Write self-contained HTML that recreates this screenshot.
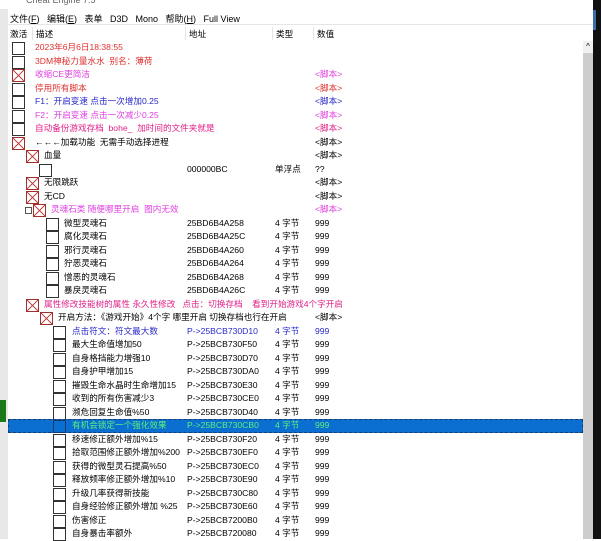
<!DOCTYPE html><html><head><meta charset="utf-8"><style>
body{margin:0;width:601px;height:539px;overflow:hidden;background:#fff;font-family:"Liberation Sans","Noto Sans CJK SC",sans-serif;font-size:8.6px;position:relative}
.a{position:absolute;white-space:nowrap}
.r{position:absolute;left:8px;width:575px;height:13.5px}
.b{position:absolute;top:1px;width:11px;height:11px;border:1px solid #333;background:#fff}
.x{background:linear-gradient(45deg,transparent 46%,#c03838 48%,#c03838 52%,transparent 54%),linear-gradient(-45deg,transparent 46%,#c03838 48%,#c03838 52%,transparent 54%) #fff;border-color:#a03030}
.t{position:absolute;top:0;line-height:13.5px}
.ad{left:179px}.ty{left:267px}.va{left:307px}
.red{color:#e03030}.mag{color:#e040e0}.blu{color:#2828c8}.pk{color:#e0208a}
</style></head><body>
<div class="a" style="left:0;top:0;width:8px;height:539px;background:#e8e8e8"></div>
<div class="a" style="left:0;top:400px;width:6px;height:22px;background:#1a7a1a"></div>
<div class="a" style="left:0;top:0;width:601px;height:9px;background:#fff"></div>
<div class="a" style="left:26px;top:-5px;font-size:9px;color:#666">Cheat Engine 7.5</div>
<div class="a" style="left:10px;top:12px;color:#000;font-size:9px">文件(<u>F</u>)&nbsp;&nbsp; 编辑(<u>E</u>)&nbsp;&nbsp; 表单&nbsp;&nbsp; D3D&nbsp;&nbsp; Mono&nbsp;&nbsp; 帮助(<u>H</u>)&nbsp;&nbsp; Full View</div>
<div class="a" style="left:8px;top:24px;width:585px;height:1px;background:#e5e5e5"></div>
<div class="a" style="left:10px;top:28px">激活</div>
<div class="a" style="left:36px;top:28px">描述</div>
<div class="a" style="left:189px;top:28px">地址</div>
<div class="a" style="left:276px;top:28px">类型</div>
<div class="a" style="left:317px;top:28px">数值</div>
<div class="a" style="left:32px;top:27px;width:1px;height:13px;background:#e5e5e5"></div>
<div class="a" style="left:185px;top:27px;width:1px;height:13px;background:#e5e5e5"></div>
<div class="a" style="left:272px;top:27px;width:1px;height:13px;background:#e5e5e5"></div>
<div class="a" style="left:313px;top:27px;width:1px;height:13px;background:#e5e5e5"></div>
<div class="a" style="left:583px;top:41px;width:10px;height:498px;background:#cdcdcd"></div>
<div class="a" style="left:583px;top:41px;width:10px;height:12px;background:#f0f0f0;font-size:8px;text-align:center;line-height:12px">^</div>
<div class="a" style="left:593px;top:0;width:8px;height:539px;background:#111"></div>
<div class="a" style="left:593px;top:10px;width:3px;height:20px;background:#3a6ea5"></div>

<div class="r" style="top:41px"><div class="b" style="left:4px"></div><div class="t red" style="left:27px">2023年6月6日18:38:55</div></div>
<div class="r" style="top:54.5px"><div class="b" style="left:4px"></div><div class="t red" style="left:27px">3DM神秘力量水水&nbsp; 别名：薄荷</div></div>
<div class="r" style="top:68px"><div class="b x" style="left:4px"></div><div class="t mag" style="left:27px">收缩CE更简洁</div><div class="t va mag">&lt;脚本&gt;</div></div>
<div class="r" style="top:81.5px"><div class="b" style="left:4px"></div><div class="t red" style="left:27px">停用所有脚本</div><div class="t va red">&lt;脚本&gt;</div></div>
<div class="r" style="top:95px"><div class="b" style="left:4px"></div><div class="t blu" style="left:27px">F1：开启变速 点击一次增加0.25</div><div class="t va blu">&lt;脚本&gt;</div></div>
<div class="r" style="top:108.5px"><div class="b" style="left:4px"></div><div class="t mag" style="left:27px">F2：开启变速 点击一次减少0.25</div><div class="t va mag">&lt;脚本&gt;</div></div>
<div class="r" style="top:122px"><div class="b" style="left:4px"></div><div class="t pk" style="left:27px">自动备份游戏存档&nbsp; bohe_&nbsp; 加时间的文件夹就是</div><div class="t va pk">&lt;脚本&gt;</div></div>
<div class="r" style="top:135.5px"><div class="b x" style="left:4px"></div><div class="t" style="left:27px">←←←加载功能&nbsp; 无需手动选择进程</div><div class="t va">&lt;脚本&gt;</div></div>
<div class="r" style="top:149px"><div class="b x" style="left:18px"></div><div class="t" style="left:36px">血量</div><div class="t va">&lt;脚本&gt;</div></div>
<div class="r" style="top:162.5px"><div class="b" style="left:31px"></div><div class="t ad">000000BC</div><div class="t ty">单浮点</div><div class="t va">??</div></div>
<div class="r" style="top:176px"><div class="b x" style="left:18px"></div><div class="t" style="left:36px">无限跳跃</div><div class="t va">&lt;脚本&gt;</div></div>
<div class="r" style="top:189.5px"><div class="b x" style="left:18px"></div><div class="t" style="left:36px">无CD</div><div class="t va">&lt;脚本&gt;</div></div>
<div class="r" style="top:203px"><div class="a" style="left:17px;top:4px;width:5px;height:5px;border:1px solid #555"></div><div class="b x" style="left:25px"></div><div class="t mag" style="left:43px">灵魂石类 随便哪里开启&nbsp; 图内无效</div><div class="t va mag">&lt;脚本&gt;</div></div>
<div class="r" style="top:216.5px"><div class="b" style="left:38px"></div><div class="t" style="left:56px">微型灵魂石</div><div class="t ad">25BD6B4A258</div><div class="t ty">4 字节</div><div class="t va">999</div></div>
<div class="r" style="top:230px"><div class="b" style="left:38px"></div><div class="t" style="left:56px">腐化灵魂石</div><div class="t ad">25BD6B4A25C</div><div class="t ty">4 字节</div><div class="t va">999</div></div>
<div class="r" style="top:243.5px"><div class="b" style="left:38px"></div><div class="t" style="left:56px">邪行灵魂石</div><div class="t ad">25BD6B4A260</div><div class="t ty">4 字节</div><div class="t va">999</div></div>
<div class="r" style="top:257px"><div class="b" style="left:38px"></div><div class="t" style="left:56px">狞恶灵魂石</div><div class="t ad">25BD6B4A264</div><div class="t ty">4 字节</div><div class="t va">999</div></div>
<div class="r" style="top:270.5px"><div class="b" style="left:38px"></div><div class="t" style="left:56px">憎恶的灵魂石</div><div class="t ad">25BD6B4A268</div><div class="t ty">4 字节</div><div class="t va">999</div></div>
<div class="r" style="top:284px"><div class="b" style="left:38px"></div><div class="t" style="left:56px">暴戾灵魂石</div><div class="t ad">25BD6B4A26C</div><div class="t ty">4 字节</div><div class="t va">999</div></div>
<div class="r" style="top:297.5px"><div class="b x" style="left:18px"></div><div class="t pk" style="left:36px">属性修改技能树的属性 永久性修改&nbsp;&nbsp; 点击：切换存档&nbsp;&nbsp;&nbsp; 看到开始游戏4个字开启</div></div>
<div class="r" style="top:311px"><div class="b x" style="left:32px"></div><div class="t" style="left:50px">开启方法：《游戏开始》4个字 哪里开启 切换存档也行在开启</div><div class="t va">&lt;脚本&gt;</div></div>
<div class="r" style="top:324.5px"><div class="b" style="left:45px"></div><div class="t blu" style="left:64px">点击符文：符文最大数</div><div class="t ad blu">P-&gt;25BCB730D10</div><div class="t ty blu">4 字节</div><div class="t va blu">999</div></div>
<div class="r" style="top:338px"><div class="b" style="left:45px"></div><div class="t" style="left:64px">最大生命值增加50</div><div class="t ad">P-&gt;25BCB730F50</div><div class="t ty">4 字节</div><div class="t va">999</div></div>
<div class="r" style="top:351.5px"><div class="b" style="left:45px"></div><div class="t" style="left:64px">自身格挡能力增强10</div><div class="t ad">P-&gt;25BCB730D70</div><div class="t ty">4 字节</div><div class="t va">999</div></div>
<div class="r" style="top:365px"><div class="b" style="left:45px"></div><div class="t" style="left:64px">自身护甲增加15</div><div class="t ad">P-&gt;25BCB730DA0</div><div class="t ty">4 字节</div><div class="t va">999</div></div>
<div class="r" style="top:378.5px"><div class="b" style="left:45px"></div><div class="t" style="left:64px">摧毁生命水晶时生命增加15</div><div class="t ad">P-&gt;25BCB730E30</div><div class="t ty">4 字节</div><div class="t va">999</div></div>
<div class="r" style="top:392px"><div class="b" style="left:45px"></div><div class="t" style="left:64px">收到的所有伤害减少3</div><div class="t ad">P-&gt;25BCB730CE0</div><div class="t ty">4 字节</div><div class="t va">999</div></div>
<div class="r" style="top:405.5px"><div class="b" style="left:45px"></div><div class="t" style="left:64px">濒危回复生命值%50</div><div class="t ad">P-&gt;25BCB730D40</div><div class="t ty">4 字节</div><div class="t va">999</div></div>
<div class="r" style="top:419px;background:#0a6fd0;outline:1px dashed #1a3a70;outline-offset:-1px"><div class="b" style="left:45px;background:#0a6fd0;border-color:#163a6a"></div><div class="t" style="left:64px;color:#5cf07a">有机会锁定一个强化效果</div><div class="t ad" style="color:#5cf07a">P-&gt;25BCB730CB0</div><div class="t ty" style="color:#5cf07a">4 字节</div><div class="t va" style="color:#5cf07a">999</div></div>
<div class="r" style="top:432.5px"><div class="b" style="left:45px"></div><div class="t" style="left:64px">移速修正额外增加%15</div><div class="t ad">P-&gt;25BCB730F20</div><div class="t ty">4 字节</div><div class="t va">999</div></div>
<div class="r" style="top:446px"><div class="b" style="left:45px"></div><div class="t" style="left:64px">拾取范围修正额外增加%200</div><div class="t ad">P-&gt;25BCB730EF0</div><div class="t ty">4 字节</div><div class="t va">999</div></div>
<div class="r" style="top:459.5px"><div class="b" style="left:45px"></div><div class="t" style="left:64px">获得的微型灵石提高%50</div><div class="t ad">P-&gt;25BCB730EC0</div><div class="t ty">4 字节</div><div class="t va">999</div></div>
<div class="r" style="top:473px"><div class="b" style="left:45px"></div><div class="t" style="left:64px">释放频率修正额外增加%10</div><div class="t ad">P-&gt;25BCB730E90</div><div class="t ty">4 字节</div><div class="t va">999</div></div>
<div class="r" style="top:486.5px"><div class="b" style="left:45px"></div><div class="t" style="left:64px">升级几率获得新技能</div><div class="t ad">P-&gt;25BCB730C80</div><div class="t ty">4 字节</div><div class="t va">999</div></div>
<div class="r" style="top:500px"><div class="b" style="left:45px"></div><div class="t" style="left:64px">自身经验修正额外增加 %25</div><div class="t ad">P-&gt;25BCB730E60</div><div class="t ty">4 字节</div><div class="t va">999</div></div>
<div class="r" style="top:513.5px"><div class="b" style="left:45px"></div><div class="t" style="left:64px">伤害修正</div><div class="t ad">P-&gt;25BCB7200B0</div><div class="t ty">4 字节</div><div class="t va">999</div></div>
<div class="r" style="top:527px"><div class="b" style="left:45px"></div><div class="t" style="left:64px">自身暴击率额外</div><div class="t ad">P-&gt;25BCB720080</div><div class="t ty">4 字节</div><div class="t va">999</div></div>
</body></html>
